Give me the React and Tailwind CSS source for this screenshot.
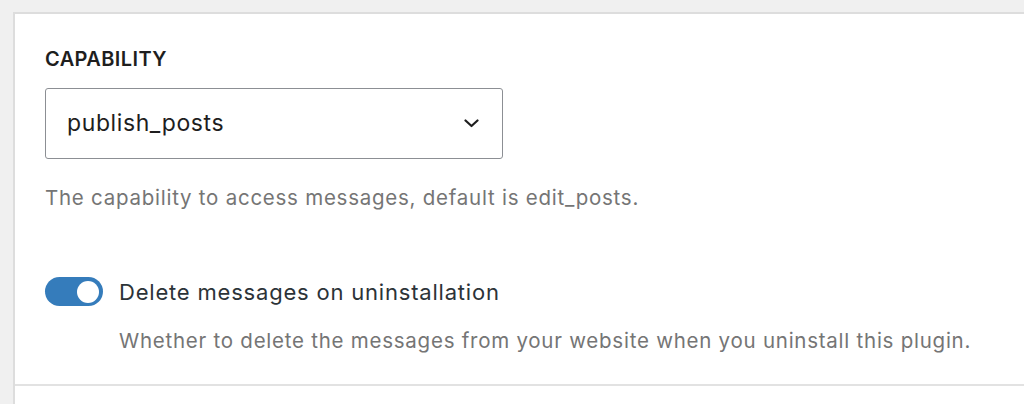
const font = { fontFamily: "Inter, 'Noto Sans', sans-serif" }

export default function App() {
  return (
    <div className="h-[404px] overflow-hidden bg-[#f0f0f0] pl-[13px] pt-[12px]" style={font}>
      <div className="h-[400px] border-l-2 border-t-2 border-[#dddddd] bg-white">
        <div className="h-[372px] border-b-2 border-[#e2e2e2] pl-[30px] pt-[33px]">
          {/* Capability select */}
          <h3 className="text-[20px] font-semibold leading-6 tracking-[0.4px] uppercase text-[#1e1e1e]">Capability</h3>
          <div className="mt-[17px] flex h-[71px] w-[458px] items-center justify-between rounded-[3px] border border-[#8c8f94] pl-[21px] pr-[23px]">
            <span className="text-[23px] tracking-[0.6px] text-[#1e1e1e]">publish_posts</span>
            <svg width="15" height="9" viewBox="0 0 15 9" fill="none" className="text-[#1e1e1e]">
              <path d="M1.5 1.5 L7.5 7 L13.5 1.5" stroke="currentColor" strokeWidth="2.2" strokeLinecap="round" strokeLinejoin="round" />
            </svg>
          </div>
          <p className="mt-[27px] text-[20.5px] leading-6 tracking-[0.75px] text-[#757575]">
            The capability to access messages, default is edit_posts.
          </p>

          {/* Uninstall toggle */}
          <div className="mt-[65px] flex gap-[16px]">
            <div className="mt-[2px] flex h-[29px] w-[58px] shrink-0 items-center justify-end rounded-full bg-[#357cbb] pr-[4px]">
              <div className="h-[22px] w-[22px] rounded-full bg-white" />
            </div>
            <div>
              <div className="text-[22px] leading-[34px] tracking-[0.8px] text-[#2c3338]">Delete messages on uninstallation</div>
              <p className="mt-[20px] text-[20.5px] leading-6 tracking-[0.75px] text-[#757575]">
                Whether to delete the messages from your website when you uninstall this plugin.
              </p>
            </div>
          </div>
        </div>
      </div>
    </div>
  )
}
